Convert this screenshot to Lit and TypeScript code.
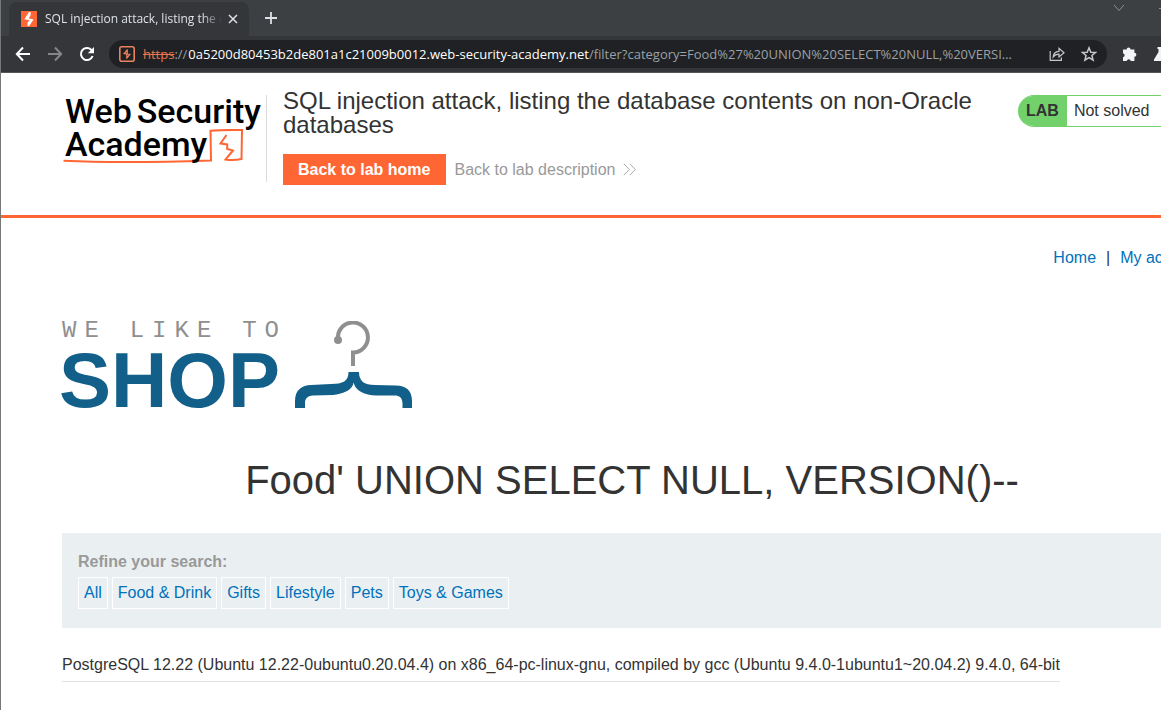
import { LitElement, html, css } from "lit";
import { customElement } from "lit/decorators.js";

@customElement("browser-bar")
class BrowserBar extends LitElement {
  static styles = css`
    :host { display: block; background: #3c4043; font-family: "Open Sans", "Noto Sans", sans-serif; color: #dee1e6; }
    button { appearance: none; border: 0; background: none; padding: 0; margin: 0; color: inherit; display: grid; place-items: center; flex: none; }
    svg { display: block; }
    .strip { display: flex; align-items: stretch; height: 36px; padding-left: 8px; }
    .tab { display: flex; align-items: center; width: 240px; margin-top: 2px; padding: 0 11px 0 12px; box-sizing: border-box; border-radius: 8px 8px 0 0; background: #35363a; font-size: 12px; }
    .title { flex: 1; margin: 0 6px 0 8px; white-space: nowrap; overflow: hidden; mask-image: linear-gradient(to right, #000 calc(100% - 20px), transparent); }
    .plus { width: 28px; margin-left: 8px; }
    .strip-end { display: flex; gap: 32px; margin-left: auto; align-self: flex-start; padding-top: 4px; color: #8f9295; }
    .toolbar { display: flex; align-items: center; height: 36px; padding-left: 14px; background: #35363a; border-bottom: 1px solid #56575a; color: #fff; overflow: hidden; }
    .nav { width: 16px; margin-right: 16px; }
    .nav.off { color: #85868a; }
    .nav.last { margin-right: 14px; }
    .address { display: flex; align-items: center; flex: 1; min-width: 0; height: 28px; padding: 0 10px; border-radius: 14px; background: #202124; font-size: 13px; }
    .lead { margin-right: 8px; }
    .scheme { color: #e8744c; text-decoration: line-through; }
    .slashes { color: #9aa0a6; margin-right: 1px; }
    .url { display: flex; flex: 1; min-width: 0; align-items: center; white-space: pre; }
    .path { flex: 1; min-width: 0; border: 0; padding: 0; background: none; outline: 0; font: inherit; color: #9aa0a6; text-overflow: ellipsis; }
    .act { width: 16px; margin-left: 16px; color: #c4c7ca; }
    .act.first { margin-left: 32px; }
    .ext { display: flex; gap: 14px; margin: 0 -8px 0 15px; color: #f1f3f4; }
  `;
  render() {
    return html`
      <div class="strip" role="tablist">
        <div class="tab" role="tab" aria-selected="true">
          <svg width="16" height="16" viewBox="0 0 16 16"><rect width="16" height="16" fill="#ff6633"/><path d="M3.4 8.2L8 1H9.6V4.4L7.6 7.2L12.6 8.4L8 15.2H6.6V11.2L8.6 9.2Z" fill="#fff"/></svg>
          <span class="title">SQL injection attack, listing the database</span>
          <button aria-label="Close tab"><svg width="10" height="10" viewBox="0 0 10 10" fill="none" stroke="currentColor" stroke-width="1.5"><path d="M1 1L9 9M9 1L1 9"/></svg></button>
        </div>
        <button class="plus" aria-label="New tab"><svg width="12" height="12" viewBox="0 0 12 12" fill="none" stroke="currentColor" stroke-width="1.8"><path d="M6 0V12M0 6H12"/></svg></button>
        <div class="strip-end">
          <button aria-label="Search tabs"><svg width="12" height="8" viewBox="0 0 12 8" fill="none" stroke="currentColor"><path d="M1 1L6 6.5L11 1"/></svg></button>
          <button aria-label="Minimize"><svg width="4" height="8" viewBox="0 0 4 8" stroke="currentColor"><path d="M2 4.5H4"/></svg></button>
        </div>
      </div>
      <div class="toolbar">
        <button class="nav" aria-label="Back"><svg width="16" height="16" viewBox="0 0 16 16" fill="none" stroke="currentColor" stroke-width="2"><path d="M15 8H2M8 1.5L1.8 8L8 14.5"/></svg></button>
        <button class="nav off" aria-label="Forward"><svg width="16" height="16" viewBox="0 0 16 16" fill="none" stroke="currentColor" stroke-width="2"><path d="M1 8H14M8 1.5L14.2 8L8 14.5"/></svg></button>
        <button class="nav last" aria-label="Reload"><svg width="16" height="16" viewBox="0 0 16 16"><path d="M13.6 10A6 6 0 1 1 12.2 3.8L13.5 5.2" fill="none" stroke="currentColor" stroke-width="2"/><path d="M15 1V7.2H8.8Z" fill="currentColor"/></svg></button>
        <div class="address">
          <svg class="lead" width="16" height="16" viewBox="0 0 16 16" fill="none" stroke="#e8835e"><rect x=".8" y=".8" width="14.4" height="14.4" rx="2" stroke-width="1.6"/><path d="M8.6 3.5L5.2 7.6L10.8 8.4L7.4 12.6M8.2 4.5V7.8M7.8 8.4V11.6" stroke-width="1.3"/></svg>
          <label class="url"><span class="scheme">https</span><span class="slashes">://</span><span>0a5200d80453b2de801a1c21009b0012.web-security-academy.net</span><input class="path" aria-label="Address" readonly value="/filter?category=Food%27%20UNION%20SELECT%20NULL,%20VERSION()--"></label>
          <button class="act first" aria-label="Share"><svg width="16" height="16" viewBox="0 0 16 16" fill="none" stroke="currentColor" stroke-width="1.2"><path d="M1.2 5V14.4H12.4V11.5M4.2 11C4.4 7.5 6.4 5.6 10 5.4V2.4L15 6.8L10 11V8.2C7.5 8.2 5.6 9 4.2 11Z"/></svg></button>
          <button class="act" aria-label="Bookmark"><svg width="16" height="16" viewBox="0 0 16 16" fill="none" stroke="currentColor" stroke-width="1.5"><path d="M8 1.8L9.8 6.2L14.5 6.5L10.9 9.5L12.1 14.2L8 11.6L3.9 14.2L5.1 9.5L1.5 6.5L6.2 6.2Z"/></svg></button>
        </div>
        <div class="ext">
          <button aria-label="Extensions"><svg width="17" height="16" viewBox="0 0 17 16" fill="currentColor"><path d="M1 3.4H4.6A2 2 0 1 1 8.6 3.4H12.4V6.8A2 2 0 1 1 12.4 10.8V15H8.8A2.1 2.1 0 0 0 4.7 15H1V11.3A2.1 2.1 0 0 0 1 7.2Z"/></svg></button>
          <button aria-label="Labs"><svg width="16" height="16" viewBox="0 0 16 16" fill="currentColor"><path d="M4.5 1H11.5V3H10.5V6L15 13.5Q15.5 15 14 15H2Q.5 15 1 13.5L5.5 6V3H4.5Z"/></svg></button>
        </div>
      </div>`;
  }
}

@customElement("lab-header")
class LabHeader extends LitElement {
  static styles = css`
    :host { display: block; border-bottom: 3px solid #ff6633; }
    .wrap { display: flex; align-items: flex-start; max-width: 1140px; margin: 0 auto; padding: 16px 0 30px; }
    .logo { position: relative; flex: none; width: 205px; height: 87px; margin: 6px 16px 0 0; box-sizing: border-box; border-right: 1px solid #dcdcdc; text-decoration: none; }
    .word { display: flex; gap: 5px; padding-left: 3px; font: 500 34px/33px Roboto, sans-serif; color: #000; }
    .mark { position: absolute; left: 0; top: 34px; z-index: -1; }
    .mid { flex: 1; }
    h2 { margin: 0; font-size: 24px; line-height: 24px; font-weight: 400; max-width: 710px; }
    .links { display: flex; align-items: center; gap: 8px; margin-top: 17px; }
    .home { background: #ff6633; color: #fff; font-weight: 700; padding: 0 16px 0 15px; line-height: 31px; text-decoration: none; }
    .desc { display: flex; align-items: center; gap: 8px; color: #999; text-decoration: none; }
    .status { display: flex; flex: none; width: 184px; height: 32px; box-sizing: border-box; border: 1px solid #72d16b; border-left: 0; border-radius: 16px; overflow: hidden; line-height: 30px; margin-top: 6px; }
    .lab { background: #72d16b; font-weight: 700; padding: 0 8px; margin: -1px 0; line-height: 32px; }
    .state { margin: 0 0 0 7px; }
  `;
  render() {
    return html`
      <header class="wrap">
        <a class="logo" href="#">
          <span class="word"><span>Web</span><span>Security</span></span>
          <span class="word">Academy</span>
          <svg class="mark" width="186" height="36" viewBox="0 0 186 36" fill="none" stroke="#ff6633" stroke-width="2"><path d="M1.5 31.8Q60 34.5 149 31.5L148.5 1.8Q160 .8 180 1L179.5 30Q171 31.8 163.5 30.5L171 21.5L165.2 20V15.4L158.5 14.4L164.5 6"/></svg>
        </a>
        <div class="mid">
          <h2>SQL injection attack, listing the database contents on non-Oracle databases</h2>
          <div class="links">
            <a class="home" href="#">Back to lab home</a>
            <a class="desc" href="#">Back to lab description
              <svg width="13" height="13" viewBox="0 0 13 13" fill="none" stroke="#aaa"><path d="M.8.8L6.3 6.5L.8 12.2M6.8.8L12.3 6.5L6.8 12.2"/></svg></a>
          </div>
        </div>
        <div class="status"><span class="lab">LAB</span><p class="state">Not solved</p></div>
      </header>`;
  }
}

@customElement("shop-page")
class ShopPage extends LitElement {
  static styles = css`
    :host { display: block; max-width: 1140px; margin: 0 auto; }
    a { color: #0071bc; text-decoration: none; }
    .top { display: flex; justify-content: flex-end; gap: 10px; padding-top: 30px; line-height: 20px; }
    .brand { display: flex; align-items: flex-start; gap: 14px; margin-top: 53px; height: 92px; }
    .name { width: 217px; }
    .like { display: flex; justify-content: space-between; font: 24px/20px "Liberation Mono", monospace; color: #8f8f8f; }
    .word { display: flex; gap: 8px; }
    .shop { margin-left: -3px; font-size: 78px; line-height: 78px; font-weight: 700; color: #12608a; }
    h1 { margin: 44px 0 0; font-size: 40px; line-height: 46px; font-weight: 400; text-align: center; }
    .search { margin-top: 30px; padding: 19px 16px; background: #eaf0f2; }
    .label { margin: 0; font-weight: 700; color: #999; line-height: 20px; }
    .filters { display: flex; gap: 4px; margin-top: 5px; }
    .filters a { border: 1px solid #fff; padding: 0 5px; line-height: 30px; }
    table { border-collapse: collapse; margin-top: 20px; }
    td { line-height: 33px; padding: 0; border-bottom: 1px solid #e3e3e3; white-space: nowrap; }
  `;
  render() {
    const filters = ["All", "Food & Drink", "Gifts", "Lifestyle", "Pets", "Toys & Games"];
    const words = ["WE", "LIKE", "TO"];
    return html`
      <nav class="top"><a href="#">Home</a><span>|</span><a href="#">My account</a></nav>
      <div class="brand">
        <div class="name">
          <div class="like">${words.map((w) => html`<span class="word">${[...w].map((c) => html`<span>${c}</span>`)}</span>`)}</div>
          <div class="shop">SHOP</div>
        </div>
        <svg width="120" height="92" viewBox="0 0 120 92">
          <path d="M45 18A15 15 0 1 1 60 31.5V45" fill="none" stroke="#8f8f8f" stroke-width="4"/>
          <circle cx="45" cy="19" r="4" fill="#8f8f8f"/>
          <path d="M2 87V80C2 69 9 64 18 64L38 63C50 63 55.5 60 55.5 51H66C66 60 71 64 82 64L103 64.5C113 65 119 69 119 80V87H109.5V82C109 76 106 74 100 74.5H83C72 74 62 70 60.7 61.5C59 70 49 73 40 74L20 74.5C14 75 12 78 12 82V87Z" fill="#12608a"/>
        </svg>
      </div>
      <h1>Food' UNION SELECT NULL, VERSION()--</h1>
      <section class="search">
        <p class="label">Refine your search:</p>
        <div class="filters">${filters.map((f) => html`<a href="#">${f}</a>`)}</div>
      </section>
      <table><tbody><tr><td>PostgreSQL 12.22 (Ubuntu 12.22-0ubuntu0.20.04.4) on x86_64-pc-linux-gnu, compiled by gcc (Ubuntu 9.4.0-1ubuntu1~20.04.2) 9.4.0, 64-bit</td></tr></tbody></table>`;
  }
}

@customElement("app-root")
class AppRoot extends LitElement {
  static styles = css`
    :host { display: block; min-height: 100vh; box-sizing: border-box; overflow: hidden; border-left: 1px solid #777; background: #fff; color: #333; font: 16px/20px "Liberation Sans", Arial, sans-serif; }
    .site { position: relative; z-index: 0; margin-right: -102px; }
  `;
  render() {
    return html`<browser-bar></browser-bar><main class="site"><lab-header></lab-header><shop-page></shop-page></main>`;
  }
}
